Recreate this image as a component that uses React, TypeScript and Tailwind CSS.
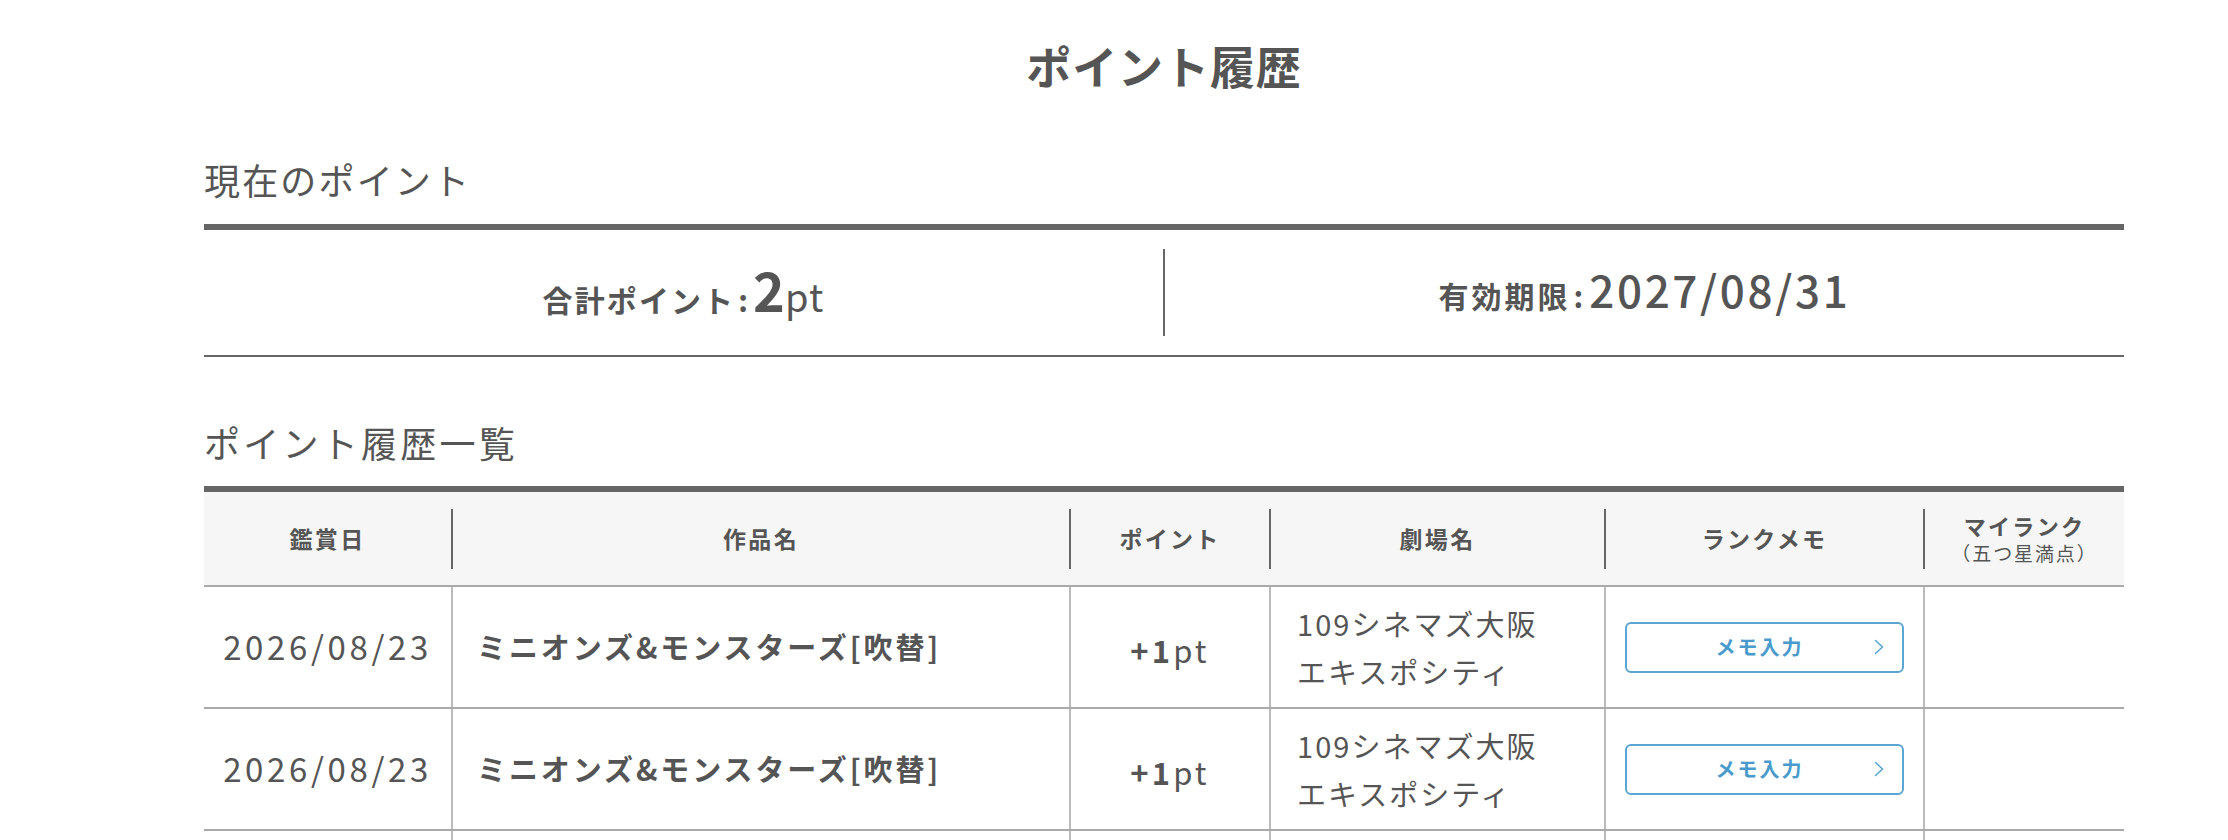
import React from "react"

const rows = [
  { date: "2026/08/23", title: "ミニオンズ&モンスターズ[吹替]", point: 1, theater: ["109シネマズ大阪", "エキスポシティ"] },
  { date: "2026/08/23", title: "ミニオンズ&モンスターズ[吹替]", point: 1, theater: ["109シネマズ大阪", "エキスポシティ"] },
  { date: "2026/08/23", title: "ミニオンズ&モンスターズ[吹替]", point: 1, theater: ["109シネマズ大阪", "エキスポシティ"] },
]

function Chevron() {
  return (
    <svg width="10" height="16" viewBox="0 0 10 16" fill="none" className="shrink-0">
      <polyline points="1.5,1.5 8.5,8 1.5,14.5" stroke="#5aa5d2" strokeWidth="1.6" strokeLinecap="round" strokeLinejoin="round" />
    </svg>
  )
}

function HeadCell({ children, first }: { children: React.ReactNode; first?: boolean }) {
  return (
    <div className="flex items-center h-full">
      <div
        className={`flex flex-col items-center justify-center w-full h-[60px] ${first ? "" : "border-l-2 border-[#666]"}`}
      >
        {children}
      </div>
    </div>
  )
}

export default function App() {
  return (
    <div className="min-h-screen bg-white text-[#555] font-['Noto_Sans_CJK_JP',sans-serif]">
      <div className="ml-[204px] w-[1920px] pt-[33px]">
        <h1 className="text-center text-[45px] leading-[66px] font-bold tracking-[0.02em]">ポイント履歴</h1>

        <h2 className="mt-[55px] text-[36px] leading-[50px] tracking-[0.06em]">現在のポイント</h2>

        <div className="mt-[20px] border-t-[6px] border-b-2 border-[#666] flex items-center h-[133px]">
          <div className="flex-1 flex items-baseline justify-center">
            <span className="text-[30px] font-bold tracking-[0.07em]">
              合計ポイント<span className="mx-[3px]">:</span>
            </span>
            <span className="text-[54px] font-bold leading-none">2</span>
            <span className="text-[38px] tracking-[0.03em]">pt</span>
          </div>
          <div className="w-[2px] h-[87px] bg-[#666]" />
          <div className="flex-1 flex items-baseline justify-center">
            <span className="text-[30px] font-bold tracking-[0.1em]">
              有効期限<span className="mx-[3px]">:</span>
            </span>
            <span className="text-[44px] font-medium tracking-[0.06em] leading-none">2027/08/31</span>
          </div>
        </div>

        <h2 className="mt-[60px] text-[36px] leading-[50px] tracking-[0.09em]">ポイント履歴一覧</h2>

        <div className="mt-[19px] border-t-[6px] border-[#666]">
          <div className="grid grid-cols-[247px_618px_200px_335px_319px_201px] h-[95px] bg-[#f6f6f6] border-b-2 border-[#aaa] text-[23px] font-bold tracking-[0.1em]">
            <HeadCell first>鑑賞日</HeadCell>
            <HeadCell>作品名</HeadCell>
            <HeadCell>ポイント</HeadCell>
            <HeadCell>劇場名</HeadCell>
            <HeadCell>ランクメモ</HeadCell>
            <HeadCell>
              <span className="leading-[28px] text-[22px]">マイランク</span>
              <span className="leading-[28px] text-[19px] font-normal tracking-[0.1em]">（五つ星満点）</span>
            </HeadCell>
          </div>

          {rows.map((row, i) => (
            <div
              key={i}
              className="grid grid-cols-[247px_618px_200px_335px_319px_201px] h-[122px] border-b-2 border-[#aaa]"
            >
              <div className="flex items-center justify-center text-[33px] tracking-[0.11em]">{row.date}</div>
              <div className="flex items-center pl-[24px] border-l-2 border-[#bbb] text-[29px] font-bold tracking-[0.1em]">
                {row.title}
              </div>
              <div className="flex items-baseline justify-center pt-[40px] border-l-2 border-[#bbb] text-[31px] tracking-[0.1em]">
                <span className="font-bold">+{row.point}</span>
                <span>pt</span>
              </div>
              <div className="flex flex-col justify-center pl-[26px] border-l-2 border-[#bbb] text-[29px] leading-[48px] tracking-[0.07em]">
                {row.theater.map((t) => (
                  <span key={t}>{t}</span>
                ))}
              </div>
              <div className="flex items-center px-[19px] border-l-2 border-[#bbb]">
                <button className="w-full h-[51px] flex items-center px-[18px] border-2 border-[#5aa5d2] rounded-[6px] bg-white">
                  <span className="flex-1 text-center text-[20px] font-bold tracking-[0.1em] text-[#4a9bcb]">メモ入力</span>
                  <Chevron />
                </button>
              </div>
              <div className="border-l-2 border-[#bbb]" />
            </div>
          ))}
        </div>
      </div>
    </div>
  )
}
